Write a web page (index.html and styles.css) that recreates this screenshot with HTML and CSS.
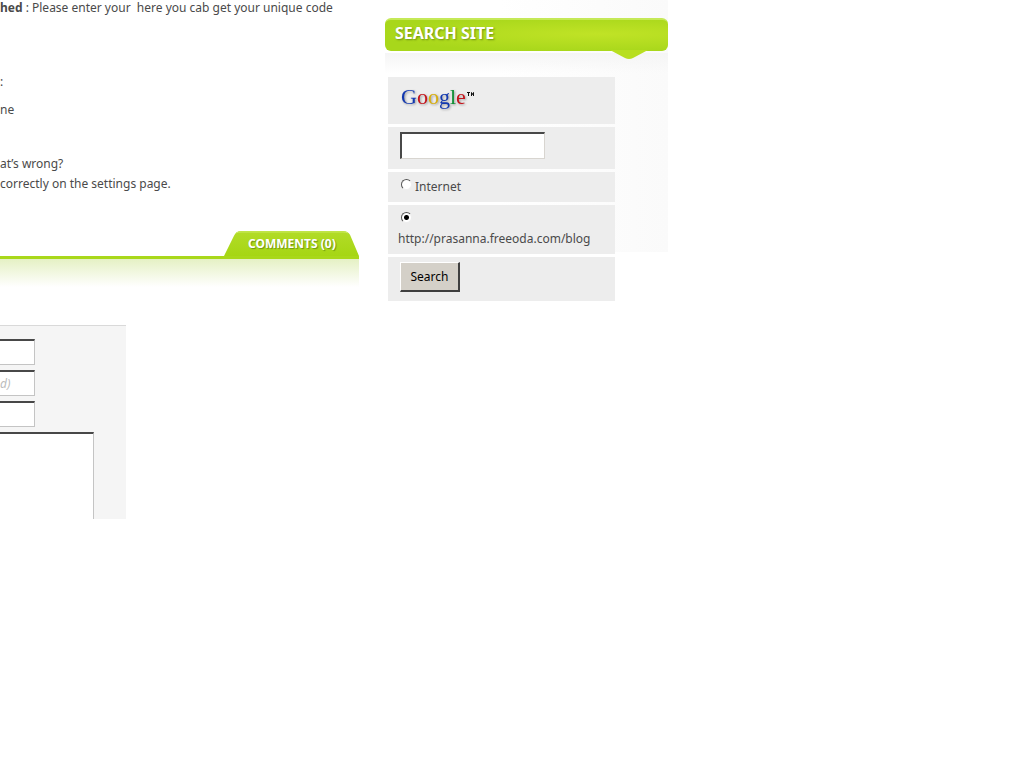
FILE: index.html
```html
<!DOCTYPE html>
<html lang="en">
<head>
<meta charset="utf-8">
<title>Blog</title>
<link rel="stylesheet" href="styles.css">
</head>
<body>
<div class="page">
  <main class="content">
    <article class="post">
      <p class="lead"><strong>hed</strong> : Please enter your&nbsp; here you cab get your unique code</p>
      <p class="item">:</p>
      <p class="item last">ne</p>
      <p>at’s wrong?<br>correctly on the settings page.</p>
    </article>
    <section class="comments">
      <div class="tabbar">
        <h2 class="tab">
          <svg class="tab-shape" viewBox="0 0 135 26" preserveAspectRatio="none" aria-hidden="true">
            <defs><linearGradient id="tabfill" x1="0" y1="0" x2="0" y2="1"><stop offset="0" stop-color="#b2dc28"/><stop offset="1" stop-color="#a6d614"/></linearGradient></defs>
            <path d="M0 26 L10 5 Q12 0 17 0 H119 Q124 0 126 4 L135 26 Z" fill="url(#tabfill)"/>
            <path d="M12 2 Q14 1 17 1 H119 Q122 1 124 2" fill="none" stroke="#cdec66" stroke-width="1"/>
          </svg>
          <span class="tab-label">COMMENTS (0)</span>
        </h2>
      </div>
      <div class="fade"></div>
      <form class="reply">
        <input class="field" type="text" aria-label="Name">
        <input class="field" type="text" aria-label="Mail" placeholder="d)">
        <input class="field" type="text" aria-label="Website">
        <textarea class="message" aria-label="Comment"></textarea>
      </form>
    </section>
  </main>
  <aside class="sidebar">
    <h2 class="side-title">SEARCH SITE
      <svg class="notch" viewBox="0 0 38 10" aria-hidden="true"><path d="M0 0 H38 L23 8 Q19 10 15 8 Z" fill="#b8df20"/></svg>
    </h2>
    <form class="search">
      <div class="row logo-row">
        <svg class="logo" viewBox="0 0 76 32" role="img" aria-label="Google">
          <text class="logo-text" x="1" y="20"><tspan fill="#1238b0">G</tspan><tspan fill="#c5151c">o</tspan><tspan fill="#d8ae10">o</tspan><tspan fill="#1238b0">g</tspan><tspan fill="#109034">l</tspan><tspan fill="#c5151c">e</tspan></text>
          <path d="M67 8.500 H70 M68.500 8.500 V12 M71.500 12 V8.500 L72.500 10.500 L73.500 8.500 V12" fill="none" stroke="#111" stroke-width="1"/>
        </svg>
      </div>
      <div class="row query-row"><input class="query" type="text" aria-label="Search terms"></div>
      <div class="row option"><input class="radio" id="net" type="radio" name="scope"><label for="net">Internet</label></div>
      <div class="row option site"><input class="radio" id="blog" type="radio" name="scope" checked><label for="blog">http://prasanna.freeoda.com/blog</label></div>
      <div class="row button-row"><button class="submit" type="button">Search</button></div>
    </form>
  </aside>
</div>
</body>
</html>
```
FILE: styles.css
```css
* { box-sizing: border-box; }
body {
  margin: 0;
  background: #fff;
  color: #4a4a4a;
  font: 12px/20px "Noto Sans", sans-serif;
}
.page {
  display: grid;
  grid-template-columns: minmax(0, 359px) minmax(0, 283px);
  column-gap: 26px;
  align-items: start;
}
.post p { margin: 0; }
.post .lead { line-height: 16px; margin-bottom: 56px; white-space: nowrap; }
.post .item { margin-bottom: 8px; }
.post .last { margin-bottom: 34px; }
.comments { padding-top: 37px; }
.tabbar { display: flex; justify-content: flex-end; border-bottom: 3px solid #a9d81a; }
.tab {
  position: relative;
  margin: 0;
  width: 135px;
  padding-left: 24px;
  font: bold 12px/25px "Noto Sans", sans-serif;
  color: #fff;
}
.tab-shape { position: absolute; left: 0; top: 0; width: 100%; height: 100%; }
.tab-label { position: relative; text-shadow: 1px 1px 1px #6f9412; }
.fade { height: 28px; background: linear-gradient(#e5f1c4, #fff); }
.reply {
  display: flex;
  flex-direction: column;
  align-items: flex-start;
  gap: 5px;
  width: 126px;
  margin-top: 38px;
  padding: 13px 32px 0 0;
  border-top: 1px solid #d9d9d9;
  background: #f5f5f5;
}
.field, .message {
  margin: 0;
  padding: 0;
  border: solid #c4c4c4;
  border-width: 2px 1px 1px 0;
  border-top-color: #484848;
  background: #fff;
  font: inherit;
}
.field { width: 35px; height: 26px; }
.field::placeholder { color: #bbb; font-style: italic; }
.message { width: 94px; height: 87px; border-bottom: 0; resize: none; }
.sidebar {
  min-height: 252px;
  padding-top: 18px;
  background: linear-gradient(90deg, #fff 40%, #fafafa) top / 100% 252px no-repeat;
}
.side-title {
  position: relative;
  margin: 0;
  padding: 0 0 5px 10px;
  border-radius: 6px;
  border-top: 2px solid #c5e957;
  background: radial-gradient(ellipse at 75% 45%, #c0e326, #a8d71b 75%);
  color: #fff;
  font: bold 16px/26px "Noto Sans", sans-serif;
  text-shadow: 1px 1px 2px #6f9412;
}
.notch { position: absolute; right: 20px; top: 30px; width: 38px; height: 10px; }
.search {
  display: flex;
  flex-direction: column;
  gap: 3px;
  padding: 26px 53px 0 3px;
  background: linear-gradient(#f5f5f5, rgba(255, 255, 255, 0)) 0 2px / 100% 20px no-repeat;
}
.row { background: #ededed; }
.logo-row { padding: 7px 12px 8px; }
.logo { display: block; width: 76px; height: 32px; }
.logo-text { font: 22px "Liberation Serif", serif; filter: drop-shadow(1px 1px 1px #999); }
.query-row { padding: 5px 12px 10px; }
.query {
  display: block;
  width: 145px;
  height: 27px;
  border: solid #d8d5d0;
  border-width: 2px 1px 1px 2px;
  border-top-color: #484848;
  border-left-color: #484848;
  background: #fff;
}
.option { display: flex; gap: 3px; padding: 5px 10px; }
.site { flex-direction: column; gap: 6px; padding: 6px 10px 5px; }
.radio {
  appearance: none;
  flex: none;
  width: 11px;
  height: 11px;
  margin: 2px 0 0 3px;
  border: 1px solid;
  border-color: #555 #eee #eee #555;
  border-radius: 50%;
  background: #fff;
}
.site .radio { margin-top: 1px; }
.radio:checked { background: radial-gradient(circle, #000 2px, #fff 3px); }
.button-row { padding: 5px 12px 9px; }
.submit {
  display: block;
  width: 60px;
  height: 30px;
  padding: 0;
  border: solid #404040;
  border-width: 1px 2px 2px 1px;
  border-top-color: #fff;
  border-left-color: #fff;
  background: #d4d0c8;
  color: #000;
  font: inherit;
}
```
